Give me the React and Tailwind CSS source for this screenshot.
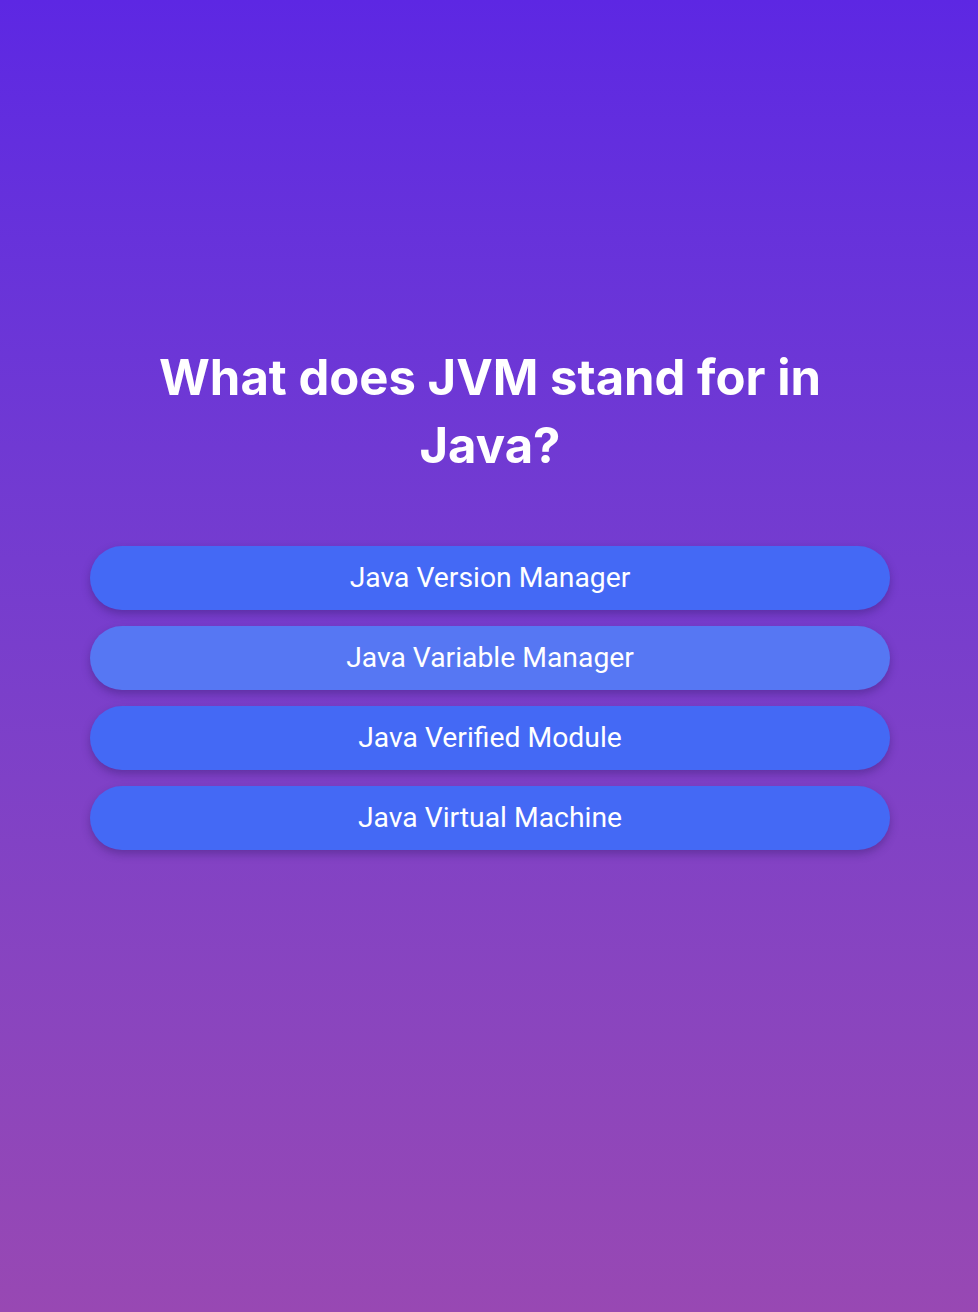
import React from 'react';

const answers = [
  'Java Version Manager',
  'Java Variable Manager',
  'Java Verified Module',
  'Java Virtual Machine',
];

// Single answer pill
const AnswerButton = ({ label, hovered }) => (
  <button
    className={`w-full h-16 rounded-full text-white text-[28.3px] shadow-[0_4px_8px_rgba(40,20,90,0.35)] ${
      hovered ? 'bg-[#5677f3]' : 'bg-[#4469f5]'
    }`}
    style={{ fontFamily: 'Roboto, sans-serif' }}
  >
    {label}
  </button>
);

export default function App() {
  return (
    <div className="min-h-[1312px] w-full bg-gradient-to-b from-[#5d27e3] to-[#9848b3] flex flex-col items-center pt-[344px] pl-[2px]">
      <div className="w-[800px] flex flex-col items-center">
        <h1
          className="text-white text-[49px] font-bold leading-[68px] text-center px-[60px]"
          style={{ fontFamily: 'Inter, sans-serif' }}
        >
          What does JVM stand for in Java?
        </h1>
        <div className="w-full flex flex-col gap-4 mt-[66px]">
          {answers.map((a, i) => (
            <AnswerButton key={a} label={a} hovered={i === 1} />
          ))}
        </div>
      </div>
    </div>
  );
}
